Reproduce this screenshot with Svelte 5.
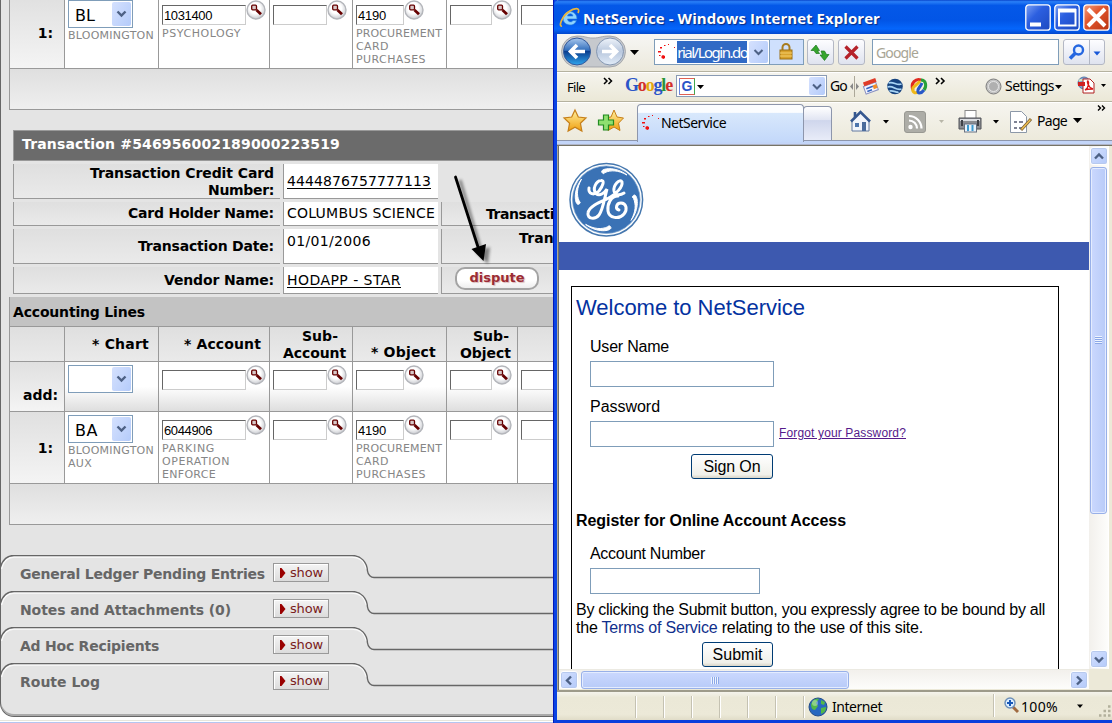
<script>
  // Spreads the letters of a label over a fixed measure.
  function fit(node, width) {
    const natural = node.getBoundingClientRect().width;
    const count = node.textContent.length;
    if (count) node.style.letterSpacing = `${(width - natural) / count}px`;
  }

  const emptyLine = [
    { box: 84 }, { box: 54 }, { box: 48 }, { box: 42 }, { box: 60, bare: true }
  ];
  const procurement = [['PROCUREMENT', 86], ['CARD', 33], ['PURCHASES', 70]];

  const firstLine = {
    chart: ['BL', 20],
    notes: [['BLOOMINGTON', 86]],
    fields: [
      { box: 84, value: '1031400', w: 48, notes: [['PSYCHOLOGY', 79]] },
      { box: 54 },
      { box: 48, value: '4190', w: 28, notes: procurement },
      { box: 42 },
      { box: 60, bare: true }
    ]
  };
  const secondLine = {
    chart: ['BA', 23],
    notes: [['BLOOMINGTON', 86], ['AUX', 24]],
    fields: [
      { box: 84, value: '6044906', w: 48, notes: [['PARKING', 53], ['OPERATION', 68], ['ENFORCE', 54]] },
      { box: 54 },
      { box: 48, value: '4190', w: 28, notes: procurement },
      { box: 42 },
      { box: 60, bare: true }
    ]
  };
  const sections = [
    ['General Ledger Pending Entries', 245],
    ['Notes and Attachments (0)', 211],
    ['Ad Hoc Recipients', 139],
    ['Route Log', 80]
  ];
</script>

{#snippet lens()}
  <svg class="lens" width="20" height="20" viewBox="0 0 20 20">
    <defs>
      <radialGradient id="lensFill" cx=".45" cy=".4" r=".6">
        <stop offset=".5" stop-color="#fff" /><stop offset="1" stop-color="#c9cbd0" />
      </radialGradient>
    </defs>
    <circle cx="10" cy="10" r="9" fill="url(#lensFill)" stroke="#b4b6bb" stroke-width="1.4" />
    <rect x="5.7" y="5.2" width="4.8" height="4.6" rx="1" fill="#d8c8c8" stroke="#600" stroke-width="1.3" />
    <path d="M10.5 10 L15 14.3" stroke="#600" stroke-width="2.8" />
  </svg>
{/snippet}

{#snippet select(label)}
  <div class="select">
    <span class="picked">{#if label}<b use:fit={label[1]}>{label[0]}</b>{/if}</span>
    <span class="drop"><svg width="19" height="24"><path d="M5.5 9.5l4 4 4-4" fill="none" stroke="#4d6185" stroke-width="2.4" /></svg></span>
  </div>
{/snippet}

{#snippet fieldCell(f, shade)}
  <div class="cell data" class:shade>
    <div class="entry">
      <div class="input" style:width="{f.box}px">{#if f.value}<span use:fit={f.w}>{f.value}</span>{/if}</div>
      {#if !f.bare}{@render lens()}{/if}
    </div>
    <div class="fieldnotes">
      {#each f.notes ?? [] as n}<div class="note"><span use:fit={n[1]}>{n[0]}</span></div>{/each}
    </div>
  </div>
{/snippet}

{#snippet line(l)}
  <div class="cell head one">1:</div>
  <div class="cell data">
    {@render select(l.chart)}
    <div class="chartnotes">
      {#each l.notes as n}<div class="note"><span use:fit={n[1]}>{n[0]}</span></div>{/each}
    </div>
  </div>
  {#each l.fields as f}{@render fieldCell(f, false)}{/each}
{/snippet}

{#snippet favicon()}
  <svg class="fav" width="20" height="18" viewBox="0 0 20 18" fill="#f01010">
    <rect x="3" y="4" width="2" height="1.500" /><rect x="7" y="2" width="1.500" height="1" /><rect x="11" y="1" width="1" height="1" /><rect x="17" y="4" width="1" height="1" />
    <rect x="1" y="8" width="3" height="1.500" /><rect x="2" y="12" width="1.500" height="1" /><path d="M4.500 13l1.500-1 2 1v2l-1.500 1-2-1z" />
  </svg>
{/snippet}

<div class="desktop">
  <div class="doc">
    <div class="grid first">
      {@render line(firstLine)}
      <div class="cell band"></div>
    </div>

    <div class="titlebar2"><span use:fit={318}>Transaction #546956002189000223519</span></div>
    <div class="info">
      <div class="lab r1"><span use:fit={184}>Transaction Credit Card</span><span use:fit={66}>Number:</span></div>
      <div class="val"><u use:fit={144}>4444876757777113</u></div>
      <div></div>
      <div class="lab"><span use:fit={146}>Card Holder Name:</span></div>
      <div class="val"><span use:fit={148}>COLUMBUS SCIENCE</span></div>
      <div class="third num"><span use:fit={68}>Transacti</span></div>
      <div class="lab"><span use:fit={136}>Transaction Date:</span></div>
      <div class="val high"><span use:fit={84}>01/01/2006</span></div>
      <div class="third tran"><span use:fit={35}>Tran</span></div>
      <div class="lab"><span use:fit={110}>Vendor Name:</span></div>
      <div class="val"><u use:fit={114}>HODAPP - STAR</u></div>
      <div class="third"><button class="dispute"><span use:fit={55}>dispute</span></button></div>
    </div>

    <div class="grid second">
      <div class="cell caption"><span use:fit={132}>Accounting Lines</span></div>
      <div class="cell th"></div>
      <div class="cell th"><span use:fit={57}>* Chart</span></div>
      <div class="cell th acc"><span use:fit={77}>* Account</span></div>
      <div class="cell th sub"><span class="s" use:fit={36}>Sub-</span><span use:fit={63}>Account</span></div>
      <div class="cell th obj"><span use:fit={65}>* Object</span></div>
      <div class="cell th subobj"><span class="s2" use:fit={36}>Sub-</span><span use:fit={51}>Object</span></div>
      <div class="cell th"></div>

      <div class="cell head add"><span use:fit={35}>add:</span></div>
      <div class="cell data shade">{@render select(null)}</div>
      {#each emptyLine as f}{@render fieldCell(f, true)}{/each}

      {@render line(secondLine)}
      <div class="cell band"></div>
    </div>

    <div class="sections">
      {#each sections as s}
        <div class="section">
          <svg class="outline" width="553" height="36" viewBox="0 0 553 36" fill="none">
            <path d="M1.5 14C3 5 8 2.5 14 2H352C361 2 365 8 366.500 14" stroke="#fafafa" stroke-width="1.5" />
            <path d="M0 14C2 5 7 .5 14 .5H352C361 .5 367 7 367.500 16C368 20 371 22.500 374 22.500H553" stroke="#666" stroke-width="1.4" />
          </svg>
          <span class="name"><span use:fit={s[1]}>{s[0]}</span></span>
          <button class="show"><svg width="6" height="10"><path d="M0 0h1.500l4 5-4 5H0z" fill="#900" /></svg><span use:fit={33}>show</span></button>
        </div>
      {/each}
    </div>
  </div>
  <div class="edge"></div>

  <svg class="arrow" width="50" height="95" viewBox="0 0 50 95">
    <defs><filter id="soft"><feGaussianBlur stdDeviation="1.6" /></filter></defs>
    <g filter="url(#soft)" opacity=".45" transform="translate(4 3)"><path d="M5 3L26 74" stroke="#000" stroke-width="3" /><path d="M20.500 75L35 70L33 87z" /></g>
    <path d="M4.500 3L27 73" stroke="#000" stroke-width="2.800" stroke-linecap="round" /><path d="M20.500 75L35 70L32.500 87z" />
  </svg>

  <div class="window">
    <div class="title">
      <svg width="27" height="34" viewBox="0 0 27 34">
        <path d="M6 18a7 7 0 1 1 14 1H10.500a3 3 0 0 0 5.500 1.500h3.500A7 7 0 0 1 6 18zm4.500-2h5.500a2.800 2.800 0 0 0-5.500 0z" fill="#8fd3ff" stroke="#2a7fd8" stroke-width=".6" />
        <path d="M5 26C1 27 5 16 12 11.500C17 8 24 7 21 13" fill="none" stroke="#eab53c" stroke-width="1.700" />
      </svg>
      <h1><span use:fit={297}>NetService - Windows Internet Explorer</span></h1>
      <div class="caps">
        <svg width="26" height="27" viewBox="0 0 26 27"><rect x=".8" y=".8" width="24.400" height="25.400" rx="3" fill="url(#blueBtn)" stroke="#fff" stroke-width="1.300" /><path d="M5 20.500h11" stroke="#fff" stroke-width="4" /></svg>
        <svg width="26" height="27" viewBox="0 0 26 27"><rect x=".8" y=".8" width="24.400" height="25.400" rx="3" fill="url(#blueBtn)" stroke="#fff" stroke-width="1.300" /><path d="M4 6.500h18" stroke="#fff" stroke-width="4" /><rect x="5" y="6" width="16.500" height="15.500" fill="none" stroke="#fff" stroke-width="2" /></svg>
        <svg width="27" height="27" viewBox="0 0 27 27"><rect x=".8" y=".8" width="25.400" height="25.400" rx="3" fill="url(#redBtn)" stroke="#fff" stroke-width="1.300" /><path d="M5 5L22 22M22 5L5 22" stroke="#fff" stroke-width="4" /></svg>
      </div>
      <svg width="0" height="0">
        <defs>
          <linearGradient id="blueBtn" x2="1" y2="1"><stop stop-color="#7ba0f4" /><stop offset=".4" stop-color="#2c5fe0" /><stop offset="1" stop-color="#1c49c0" /></linearGradient>
          <linearGradient id="redBtn" x2="1" y2="1"><stop stop-color="#f0a080" /><stop offset=".4" stop-color="#e2572f" /><stop offset="1" stop-color="#b83410" /></linearGradient>
          <linearGradient id="backBtn" y2="1" x2="0"><stop stop-color="#a9c8ee" /><stop offset=".45" stop-color="#3470bd" /><stop offset=".5" stop-color="#0c3f8f" /><stop offset="1" stop-color="#2fa6ee" /></linearGradient>
          <linearGradient id="fwdBtn" y2="1" x2="0"><stop stop-color="#eef3fa" /><stop offset=".5" stop-color="#b9c8de" /><stop offset="1" stop-color="#e2ecf8" /></linearGradient>
          <linearGradient id="gold" y2="1" x2="0"><stop stop-color="#fff0a0" /><stop offset="1" stop-color="#f0a010" /></linearGradient>
        </defs>
      </svg>
    </div>

    <div class="nav">
      <svg width="97" height="37" viewBox="0 0 97 37">
        <path d="M20 2C29 2 29 4 36 4S44 2 53 2A15 15 0 0 1 53 33H20A15 15 0 0 1 20 2z" fill="#c6c9cd" stroke="#9a9da2" stroke-width=".8" />
        <circle cx="20" cy="17.500" r="13.500" fill="url(#backBtn)" stroke="#33589a" /><circle cx="53" cy="17.500" r="13.500" fill="url(#fwdBtn)" stroke="#8496b0" />
        <path d="M28 17.500H14M20 11l-6.500 6.500L20 24" fill="none" stroke="#fff" stroke-width="3.600" /><path d="M45 17.500H59M53 11l6.500 6.500L53 24" fill="none" stroke="#fff" stroke-width="3.600" />
        <path d="M73 16h9l-4.500 5z" />
      </svg>
      <div class="address">
        <div class="favbox">{@render favicon()}</div>
        <div class="url"><span use:fit={70}>rial/Login.do</span></div>
        <div class="dd"><svg width="19" height="23"><path d="M5.500 9l4 4 4-4" fill="none" stroke="#4d6185" stroke-width="2" /></svg></div>
        <div class="lock"><svg width="14" height="17" viewBox="0 0 14 17"><path d="M3.500 8V4.500a3.500 3.500 0 0 1 7 0V8" fill="none" stroke="#a87c20" stroke-width="2" /><rect x="1" y="7" width="12" height="9" fill="#d9a22c" stroke="#9b6f14" /><path d="M1 10h12M1 13h12" stroke="#f4cf6c" /></svg></div>
      </div>
      <div class="btn"><svg width="25" height="25" viewBox="0 0 25 25" fill="#35a52c" stroke="#1d7a1c" stroke-width=".7"><path d="M3 10.500L8 5l3.500 5.500H9.500l2 3H8L6 10.500z" /><path d="M21 14.500L16.500 20.500 12 15h2.500l-1.500-4h3.500l2 3.500z" /></svg></div>
      <div class="btn stop"><svg width="25" height="25" viewBox="0 0 25 25"><path d="M6.500 6.500l12 12M18.500 6.500l-12 12" stroke="#b5222a" stroke-width="3.200" /></svg></div>
      <div class="search"><span use:fit={42}>Google</span></div>
      <div class="find"><svg width="41" height="25" viewBox="0 0 41 25"><circle cx="14.500" cy="10" r="4.500" fill="#eaf2ff" stroke="#2567e0" stroke-width="2.400" /><path d="M11 13.500l-5 5" stroke="#2567e0" stroke-width="3.600" /><path d="M25.500 0v25" stroke="#b0b6c4" /><path d="M29.500 11.500h7l-3.500 4z" fill="#1858d8" /></svg></div>
    </div>

    <div class="gbar">
      <span class="t file" use:fit={18}>File</span>
      <svg class="chev" width="12" height="30" viewBox="0 0 12 30"><path d="M1 6l3 3-3 3M5.500 6l3 3-3 3" fill="none" stroke="#000" stroke-width="1.500" /></svg>
      <span class="google" use:fit={47}><i class="b">G</i><i class="r">o</i><i class="y">o</i><i class="b">g</i><i class="g">l</i><i class="r">e</i></span>
      <div class="gbox"><span class="gi">G</span><svg width="8" height="19"><path d="M0 8h7l-3.500 4z" /></svg><div class="dd"><svg width="16" height="19"><path d="M4 7.500l4 4 4-4" fill="none" stroke="#4d6185" stroke-width="2" /></svg></div></div>
      <span class="t go" use:fit={17}>Go</span>
      <svg width="138" height="30" viewBox="0 0 138 30">
        <path d="M7.500 4v21" stroke="#aca899" /><path d="M6 11v7l-3-3.500zM9 11v7l3-3.500z" fill="#888" />
        <g transform="rotate(-20 24 15)"><rect x="17" y="12" width="13" height="8" fill="#f4f4ff" stroke="#8890c0" /><rect x="18" y="8" width="13" height="4" fill="#e03c28" /><path d="M19 15h7M19 18h5" stroke="#3464c0" stroke-width="1.500" /><rect x="26" y="14" width="4" height="4" fill="#f08c28" /></g>
        <circle cx="48" cy="14.500" r="7.800" fill="#16437f" /><path d="M41.500 11c5-2 8 3 13 1M40.500 15c6-2 8 4 14 2M42.500 19c4-1 7 2 9 1" stroke="#a8d4f4" stroke-width="1.800" fill="none" />
        <g fill="none" stroke-width="3"><path d="M66 18C63 11 69 6 74 8" stroke="#e02a20" /><path d="M74 8C79 8 80 14 77 18" stroke="#28a038" /><path d="M71 20C68 22 65 20 66 16C67 14 71 12 73 9" stroke="#f0b818" /><path d="M77 18C74 22 70 22 71 18C72 15 74 14 75 11" stroke="#2858c8" /></g>
        <path d="M89 6l3 3-3 3M94 6l3 3-3 3" fill="none" stroke="#000" stroke-width="1.600" />
      </svg>
      <svg width="20" height="30" viewBox="0 0 20 30"><circle cx="8.500" cy="14.500" r="7.500" fill="#c2c2c2" stroke="#7e7e7e" /><circle cx="8.500" cy="14.500" r="5" fill="#b0b0b0" stroke="#e6e6e6" /></svg>
      <span class="t settings" use:fit={49}>Settings</span>
      <svg width="58" height="30" viewBox="0 0 58 30">
        <path d="M1 13h7l-3.500 4z" />
        <circle cx="30" cy="11" r="6" fill="#7d9fcf" stroke="#5878a8" /><path d="M25 9c3-3 6 2 9-1" stroke="#d8e8c0" stroke-width="2" fill="none" /><path d="M29 7h7l4 4v10H29z" fill="#fff" stroke="#b02020" /><path d="M31 18c4-2 4-8 3-9s-1 6 5 8c-3 0-6 0-8 1z" fill="none" stroke="#d81818" stroke-width="1.400" /><rect x="24" y="10" width="7" height="4" fill="#d02020" />
        <path d="M47 12h5l-2.500 3z" />
      </svg>
    </div>

    <div class="tabs">
      <svg width="80" height="39" viewBox="0 0 80 39">
        <path d="M18 8l3.300 7 7.700 1-5.600 5.200 1.500 7.800-6.900-3.800-6.900 3.800 1.500-7.800L7 16l7.700-1z" fill="url(#gold)" stroke="#c67f18" stroke-width="1.200" />
        <path d="M57 8l3 7 6.500 1-5 5.200 1.500 7.300-6-3.500-6 3.500 1.500-7.300-5-5.200 6.500-1z" fill="url(#gold)" stroke="#c67f18" />
        <path d="M46.500 13h5v5h5v5h-5v5h-5v-5h-5v-5h5z" fill="#8fe070" stroke="#228a22" stroke-width="1.200" />
      </svg>
      <div class="tab">{@render favicon()}<span class="t" use:fit={65}>NetService</span></div>
      <div class="newtab"></div>
      <svg width="205" height="39" viewBox="0 0 205 39">
        <path d="M20 18v11h17V18l-8-8z" fill="#f2f5fb" stroke="#63789f" /><path d="M19 19.500l9.500-9.500L38 19.500" fill="none" stroke="#35578f" stroke-width="2.600" /><path d="M23 10v5" stroke="#35578f" stroke-width="2.600" /><rect x="23" y="21" width="4" height="4" fill="#4c74ac" /><rect x="30" y="20" width="4" height="9" fill="#4c6c9c" />
        <path d="M51 18h6l-3 3.500z" />
        <rect x="72.500" y="9.500" width="21" height="21" rx="2.500" fill="#adada7" stroke="#989892" /><circle cx="78.500" cy="25" r="2.200" fill="#fff" /><path d="M77 18.500a8 8 0 0 1 8 8M77 14a12.500 12.500 0 0 1 12.500 12.500" fill="none" stroke="#fff" stroke-width="2.200" />
        <path d="M107 18h5l-2.500 3z" fill="#b8b6a8" />
        <rect x="133" y="8.500" width="11" height="9" fill="#fff" stroke="#8a8a8a" /><path d="M127 16h22v11h-22z" fill="#8b8d92" stroke="#505258" /><path d="M128 18h20" stroke="#dcdee2" stroke-width="2" /><path d="M130 18v6M146 18v6" stroke="#404248" stroke-width="2" /><rect x="132.500" y="22" width="12" height="8" fill="#e9f3fc" stroke="#687080" /><path d="M136 23v6M140.500 23v6" stroke="#3c9ad0" stroke-width="2" />
        <path d="M161 18h6l-3 3.500z" />
        <path d="M178.500 9.500h11l5 5v16h-16z" fill="#fff" stroke="#8c98a8" /><path d="M182 20h3M187 20h4M182 26h3M187 26h3" stroke="#545a70" stroke-width="1.500" /><path d="M189 28l10-11" stroke="#7b6136" stroke-width="3" /><path d="M189.500 27.500l9-10" stroke="#f0c050" stroke-width="1.400" />
      </svg>
      <span class="t page" use:fit={30}>Page</span>
      <svg width="45" height="39" viewBox="0 0 45 39"><path d="M6 16h9l-4.500 5z" /><path d="M31 3.500l2.500 2.500L31 8.500M35 3.500l2.500 2.500L35 8.500" fill="none" stroke="#000" stroke-width="1.400" /></svg>
    </div>

    <div class="view">
      <div class="site">
        <div class="brand">
          <svg width="76" height="76" viewBox="0 0 76 76">
            <circle cx="37.300" cy="37.700" r="36.300" fill="#fff" stroke="#4577ae" stroke-width="1.500" /><circle cx="37.300" cy="37.700" r="33.800" fill="#3a72b5" stroke="#7ea6d0" stroke-width=".7" />
            {#each [0, 90, 180, 270] as a}
              <path d="M33 10.500C30 7 45 3 58 13C49 8 42 8 36 10.500C35 12 34 12 33 10.500z" fill="#fff" stroke="#fff" transform="rotate({a} 37.3 37.7)" />
            {/each}
            <g fill="none" stroke="#fff" stroke-width="3" stroke-linecap="round">
              <path d="M20 26C19 32 25 34 30 29C34 24 36 18 32 18.500C27 19 23 27 27 31.500C31 35 36 30 38 27C36 34 34 48 30 53C26 58 18 57 19 51C20 44 31 40 40 36" />
              <path d="M40 36C47 32 54 25 53 20C51 16 44 23 45 29C46 34 52 33 55 31M49 34C42 34 38 42 39 49C40 56 50 58 55 52C59 47 57 41 52 41C47 41 46 47 50 48" />
            </g>
          </svg>
        </div>
        <div class="stripe"></div>
        <div class="panel">
          <h2><span use:fit={229}>Welcome to NetService</span></h2>
          <div class="row user"><span use:fit={79}>User Name</span></div>
          <div class="field"></div>
          <div class="row pass"><span use:fit={70}>Password</span></div>
          <div class="pair"><div class="field"></div><a href="#forgot" use:fit={127}>Forgot your Password?</a></div>
          <button class="xp sign"><span use:fit={57}>Sign On</span></button>
          <h3><span use:fit={270}>Register for Online Account Access</span></h3>
          <div class="row account"><span use:fit={115}>Account Number</span></div>
          <div class="field short"></div>
          <p><span use:fit={469}>By clicking the Submit button, you expressly agree to be bound by all</span><br /><span use:fit={347}>the <em>Terms of Service</em> relating to the use of this site.</span></p>
          <button class="xp submit"><span use:fit={50}>Submit</span></button>
        </div>
      </div>
      <div class="vbar">
        <div class="sb"><svg width="16" height="17"><path d="M4 10.500l4-4 4 4" /></svg></div>
        <div class="vthumb"><i></i><i></i><i></i><i></i></div>
        <div class="sb"><svg width="16" height="17"><path d="M4 6.500l4 4 4-4" /></svg></div>
      </div>
      <div class="hbar">
        <div class="sb"><svg width="16" height="17"><path d="M10 4.500l-4 4 4 4" /></svg></div>
        <div class="hthumb"><i></i><i></i><i></i><i></i></div>
        <div class="sb"><svg width="16" height="17"><path d="M6 4.500l4 4-4 4" /></svg></div>
      </div>
      <div class="corner"></div>
    </div>

    <div class="status">
      <div class="wells">{#each Array(7) as _}<i></i>{/each}</div>
      <svg width="28" height="28" viewBox="0 0 28 28"><circle cx="14" cy="15" r="9" fill="#2868c0" stroke="#244c88" /><path d="M7 12c2-5 5-6 8-5l-3 4 2 3-3 4c-3 0-4-3-4-6zM17 16l5-1c0 4-2 6-5 7zM17 8l4 2-1 3-3-1z" fill="#52b848" /><circle cx="11" cy="11" r="3" fill="#fff" opacity=".35" /></svg>
      <div class="net"><span class="t" use:fit={50}>Internet</span></div>
      <svg class="zoom" width="28" height="28" viewBox="0 0 28 28"><path d="M.5 2v23" stroke="#c5c2b2" /><path d="M1.500 2v23" stroke="#fff" /><path d="M20 15l5 5" stroke="#a06a40" stroke-width="3" /><circle cx="17" cy="11" r="5" fill="#dceeff" stroke="#6d8fb8" stroke-width="1.400" /><path d="M17 8v6M14 11h6" stroke="#1858b8" stroke-width="2" /></svg>
      <span class="t" use:fit={37}>100%</span>
      <svg width="54" height="28" viewBox="0 0 54 28"><path d="M19 12.500h6l-3 3.500z" /><path d="M50 14.500h2.500M45.500 19h2.500M50 19h2.500M41 23.500h2.500M45.500 23.500h2.500M50 23.500h2.500" stroke="#b3b09c" stroke-width="2.500" /></svg>
    </div>
  </div>
</div>

<style>
  :global(body) { margin: 0; background: #fff; overflow: hidden; }
  * { box-sizing: border-box; }
  svg { display: block; flex: none; }
  span, u { white-space: nowrap; }
  .desktop { position: relative; width: 1112px; height: 723px; overflow: hidden; background: #fff; font-family: "DejaVu Sans", sans-serif; }
  .doc { width: 580px; height: 717px; background: #e4e4e4; border-left: 1px solid #666; border-bottom: 1px solid #666; border-bottom-left-radius: 14px; box-shadow: inset 0 -2px #aaa; overflow: hidden; }
  .edge { height: 6px; margin-top: 3px; border-top: 1px solid #e8e6dc; box-shadow: inset 0 1px #fff, inset 0 3px #b4c5f0; }

  .grid { display: grid; width: 544px; margin-left: 8px; grid-template-columns: 54px 93px 110px 82px 93px 70px 35px; gap: 1px; padding-left: 1px; padding-bottom: 1px; background: #999; overflow: hidden; }
  .first { margin-top: -3px; grid-template-rows: 71px 40px; }
  .second { margin-top: 3px; grid-template-rows: 29px 34px 49px 71px 40px; }
  .cell { overflow: hidden; min-width: 0; }
  .band { grid-column: 1 / -1; background: linear-gradient(#dfdfdf, #efefef); }
  .head { background: linear-gradient(#e0e0e0, #f4f4f4); font-weight: 700; font-size: 14px; display: flex; align-items: center; justify-content: flex-end; padding-right: 11px; }
  .add { padding: 16px 6px 0 0; }
  .data { background: #fff; padding: 3px 0 0 3px; }
  .shade { background: linear-gradient(#fff 50%, #dedede); }
  .entry { display: flex; }
  .input { height: 20px; margin-top: 5px; flex: none; border: 1px solid #ccc; border-top-color: #666; border-left-color: #666; background: #fff; font: 13px/19px "Liberation Sans", sans-serif; padding-left: 1px; }
  .note { font-size: 11px; line-height: 13px; height: 13px; color: #868686; white-space: nowrap; }
  .fieldnotes { margin-top: 2px; }
  .chartnotes { margin-top: 1px; }
  .select { display: flex; width: 65px; height: 28px; border: 1px solid #7f9db9; background: #fff; padding: 1px; font-size: 16px; }
  .picked { width: 43px; padding-left: 5px; line-height: 27px; }
  .picked b { font-weight: 400; }
  .drop, .dd { background: linear-gradient(120deg, #d5e1fe, #b4cbfa); border-radius: 2px; }
  .drop { width: 19px; height: 24px; }

  .titlebar2 { height: 31px; margin: 20px 0 3px 12px; border: 1px solid #999; border-right: 0; background: #6b6b6b; color: #fff; font: 700 14px/27px "DejaVu Sans", sans-serif; padding-left: 8px; }
  .info { display: grid; margin-left: 12px; width: 540px; grid-template-columns: 267px 155px 112px; column-gap: 3px; row-gap: 3px; grid-template-rows: 35px 24px 35px 27px; font-size: 14px; line-height: 17px; }
  .lab, .third, .val { border-left: 1px solid #999; border-bottom: 1px solid #999; }
  .lab, .third { background: linear-gradient(#dfdfdf, #eaeaea); font-weight: 700; }
  .lab { display: flex; flex-direction: column; justify-content: center; align-items: flex-end; padding-right: 6px; }
  .r1 { padding-top: 1px; }
  .val { background: #fff; display: flex; align-items: center; padding-left: 3px; }
  .val u { text-underline-offset: 2px; }
  .high { align-items: flex-start; padding-top: 4px; }
  .third { overflow: hidden; }
  .num { padding: 4px 0 0 44px; }
  .tran { padding: 1px 0 0 77px; }
  .dispute { display: block; width: 84px; height: 23px; margin-left: 13px; border: 2px solid #a4a4a4; border-radius: 10px; background: linear-gradient(#fff 60%, #eee); padding: 0 0 2px; color: #9c2c34; font: 700 13px/17px "DejaVu Sans", sans-serif; text-shadow: 1px 1px 1px #d8b8b8; }
  .caption { grid-column: 1 / -1; background: #c3c3c3; font: 700 14px/30px "DejaVu Sans", sans-serif; padding-left: 3px; }
  .th { background: linear-gradient(#dfdfdf, #eaeaea); font-size: 14px; line-height: 17px; font-weight: 700; display: flex; flex-direction: column; justify-content: center; align-items: flex-end; padding-right: 9px; }
  .acc { padding-right: 8px; }
  .sub { padding: 1px 6px 0 0; }
  .obj { justify-content: flex-end; padding-right: 10px; }
  .subobj { padding: 1px 6px 0 0; }
  .s { margin-right: 8px; }
  .s2 { margin-right: 2px; }

  .sections { margin-left: -1px; margin-top: 30px; }
  .section { position: relative; display: flex; height: 36px; }
  .outline { position: absolute; left: 0; top: 0; }
  .name { width: 273px; padding-left: 20px; font: 700 14px/38px "DejaVu Sans", sans-serif; color: #666; }
  .show { display: flex; align-items: center; gap: 4px; width: 56px; height: 19px; margin-top: 8px; padding: 0 0 0 6px; border: 1px solid #999; background: linear-gradient(#f4f4f4, #dcdcdc); color: #7a2020; font: 13px/15px "DejaVu Sans", sans-serif; box-shadow: inset 1px 1px #fff; }
  .arrow { position: absolute; left: 451px; top: 174px; }

  .window { position: absolute; left: 553px; top: 0; width: 559px; height: 723px; border-left: 4px solid #0a44e4; border-bottom: 3px solid #0a3fdc; background: #ece9d8; box-shadow: inset 1px 0 #f4f2e8; }
  .window::before { content: ""; position: absolute; left: -4px; top: 0; width: 1px; height: 723px; background: #0319b8; }
  .title { display: flex; height: 34px; margin-left: -3px; padding-left: 3px; background: linear-gradient(#0a46cc, #2a80f8 5%, #0458e8 16%, #0255e6 60%, #0566fc 85%, #0348cc); border-top-left-radius: 5px; }
  h1 { margin: 0 0 0 -1px; font: 700 15px/37px "Open Sans", sans-serif; color: #fff; text-shadow: 1px 1px 1px #0a2a80; width: 442px; flex: none; }
  .caps { display: flex; gap: 3px; padding-top: 4px; }
  .t { font: 14px/20px "Noto Sans", sans-serif; color: #000; flex: none; }
  .nav { display: flex; height: 37px; background: linear-gradient(#f6f6f4, #ece9dc); }
  .address { display: flex; width: 150px; height: 26px; margin-top: 5px; border: 1px solid #7f9db9; background: #fff; flex: none; }
  .favbox { width: 22px; padding: 3px 0 0 2px; }
  .url { width: 71px; height: 22px; margin: 1px 1px 0 0; overflow: hidden; background: #316ac5; color: #fff; font: 15px/22px "Noto Sans", sans-serif; display: flex; justify-content: flex-end; }
  .address .dd { width: 19px; height: 22px; margin: 1px 0 0 1px; }
  .lock { width: 34px; margin-left: 1px; background: #cfe0fd; border-left: 1px solid #7f9db9; padding: 3px 0 0 9px; }
  .btn, .find { height: 26px; margin: 5px 0 0 3px; width: 27px; border: 1px solid #b4b8c4; border-radius: 3px; background: linear-gradient(#fdfdff, #dfe3ef); flex: none; }
  .stop { margin-left: 4px; }
  .find { width: 42px; margin-left: 4px; }
  .search { width: 187px; height: 26px; margin: 5px 0 0 7px; border: 1px solid #7f9db9; background: #fff; color: #a8a595; font: 14px/25px "Noto Sans", sans-serif; padding-left: 3px; }
  .gbar { display: flex; height: 30px; border-top: 1px solid #b5b2a0; box-shadow: inset 0 1px #fff; padding-left: 10px; background: linear-gradient(#f5f4ee, #ebe8d7); }
  .file { margin-top: 5px; font-size: 13px; }
  .chev { margin-left: 18px; }
  .google { margin: 2px 4px 0 10px; font: 700 18px/22px "Liberation Serif", serif; flex: none; }
  .google i { font-style: normal; }
  .b { color: #2b55c8; } .r { color: #d2302a; } .y { color: #e4a80e; } .g { color: #28953a; }
  .gbox { display: flex; width: 151px; height: 22px; margin-top: 3px; border: 1px solid #8a9bb4; background: #fff; flex: none; padding: 1px 1px 1px 2px; }
  .gi { width: 16px; height: 17px; margin-top: 1px; border: 1px solid; border-color: #e06050 #40a850 #e06050 #6888e0; color: #2b55c8; font: 700 14px/15px "Liberation Sans", sans-serif; text-align: center; margin-right: 2px; }
  .gbox .dd { width: 16px; height: 18px; margin-left: auto; }
  .go { margin: 4px 0 0 3px; }
  .settings { margin-top: 4px; }
  .tabs { display: flex; height: 45px; border-top: 1px solid #b5b2a0; box-shadow: inset 0 1px #fff, inset 0 -1px #777466, inset 0 -2px #aeb4c8, inset 0 -5px #c3d5f8, inset 0 -6px #8d96ac; background: linear-gradient(#f6f5f0, #ebe8d8); }
  .tab { display: flex; width: 167px; height: 38px; margin-top: 2px; border: 1px solid #8d96ac; border-bottom: 0; border-radius: 4px 4px 0 0; background: linear-gradient(#fbfdff 20%, #d8e8fc 22%, #c3d8fa); padding: 9px 0 0 3px; }
  .tab .t { line-height: 18px; }
  .newtab { width: 29px; margin-left: -1px; height: 34px; margin-top: 4px; border: 1px solid #8d96ac; border-bottom: 0; border-radius: 4px 4px 0 0; background: linear-gradient(#fff, #e0e4f2 40%, #cfd6ec 41%, #e8ecf8); }
  .page { margin-top: 9px; }

  .view { display: grid; width: 551px; height: 544px; grid-template-columns: 530px 20px; grid-template-rows: 523px 20px; border-left: 1px solid #aca899; box-shadow: inset 1px 0 #716f64; padding-left: 1px; }
  .site { background: #fff; width: 530px; overflow: hidden; font: 16px/18px "Liberation Sans", sans-serif; color: #000; }
  .brand { height: 96px; padding: 16px 0 0 10px; }
  .stripe { height: 28px; background: #3d59af; }
  .panel { width: 488px; height: 400px; margin: 16px 0 0 12px; border: 1px solid #000; padding: 9px 0 0 4px; }
  h2 { margin: 0; font-weight: 400; font-size: 22px; line-height: 24px; color: #0432a0; }
  .row { padding-left: 14px; height: 18px; }
  .user { margin-top: 18px; }
  .field { width: 184px; height: 26px; margin: 5px 0 0 14px; border: 1px solid #7f9db9; background: #fff; }
  .pass { margin-top: 11px; }
  .pair { display: flex; }
  .pair a { margin: 10px 0 0 5px; font-size: 12px; line-height: 15px; height: 15px; color: #551a8b; }
  .xp { display: block; height: 25px; padding: 0; border: 1px solid #003c74; border-radius: 3px; background: linear-gradient(#fff, #f0f0ea 85%, #d9d5c8); font: 16px/22px "Liberation Sans", sans-serif; color: #000; }
  .sign { width: 82px; margin: 7px 0 0 115px; }
  h3 { margin: 33px 0 0; font-size: 16px; line-height: 18px; }
  .account { margin-top: 15px; }
  .short { width: 170px; }
  p { margin: 7px 0 0; height: 36px; }
  em { font-style: normal; color: #10308c; }
  .submit { width: 71px; margin: 5px 0 0 126px; }

  .vbar { display: flex; flex-direction: column; background: linear-gradient(90deg, #f2f0ec, #fdfdfb); padding: 1px; border-right: 1px solid #fff; }
  .hbar { display: flex; background: linear-gradient(#f2f0ec, #fdfdfb); padding: 1px; border-top: 1px solid #eceae2; }
  .sb { width: 18px; height: 18px; flex: none; border: 1px solid #fff; border-radius: 3px; background: linear-gradient(135deg, #d4e0fe, #b4cafa); box-shadow: 0 0 0 1px #b7c9ee inset; }
  .sb path { fill: none; stroke: #4d6185; stroke-width: 2.400; }
  .sb:last-child { margin-top: auto; }
  .hbar .sb:last-child { margin: 0 0 0 auto; }
  .vthumb, .hthumb { display: flex; align-items: center; justify-content: center; border: 1px solid #98b0e8; border-radius: 3px; box-shadow: inset 0 0 0 1px #e4ecff; }
  .vthumb { flex-direction: column; gap: 1px; width: 17px; height: 347px; margin-top: 2px; background: linear-gradient(90deg, #cbd8fe, #b8cbf8); }
  .hthumb { gap: 1px; width: 268px; height: 18px; margin-left: 3px; background: linear-gradient(#cbd8fe, #b8cbf8); }
  .vthumb i { width: 7px; height: 1px; background: #8ca8e8; box-shadow: 0 -1px #eef4fe; }
  .hthumb i { width: 1px; height: 7px; background: #8ca8e8; box-shadow: -1px 0 #eef4fe; }
  .corner { background: #ece9d8; }
  .status { display: flex; height: 30px; border-top: 2px solid #9d9a8a; background: linear-gradient(#f4f3ec, #ebe8d7 20%, #ece9d8 80%, #e0dcc8); }
  .wells { display: flex; padding-left: 78px; width: 247px; gap: 26px; flex: none; }
  .wells i { width: 2px; height: 22px; margin-top: 4px; background: #c5c2b2; border-right: 1px solid #fff; flex: none; }
  .status .t { margin-top: 5px; }
  .net { display: flex; width: 161px; flex: none; }
</style>
